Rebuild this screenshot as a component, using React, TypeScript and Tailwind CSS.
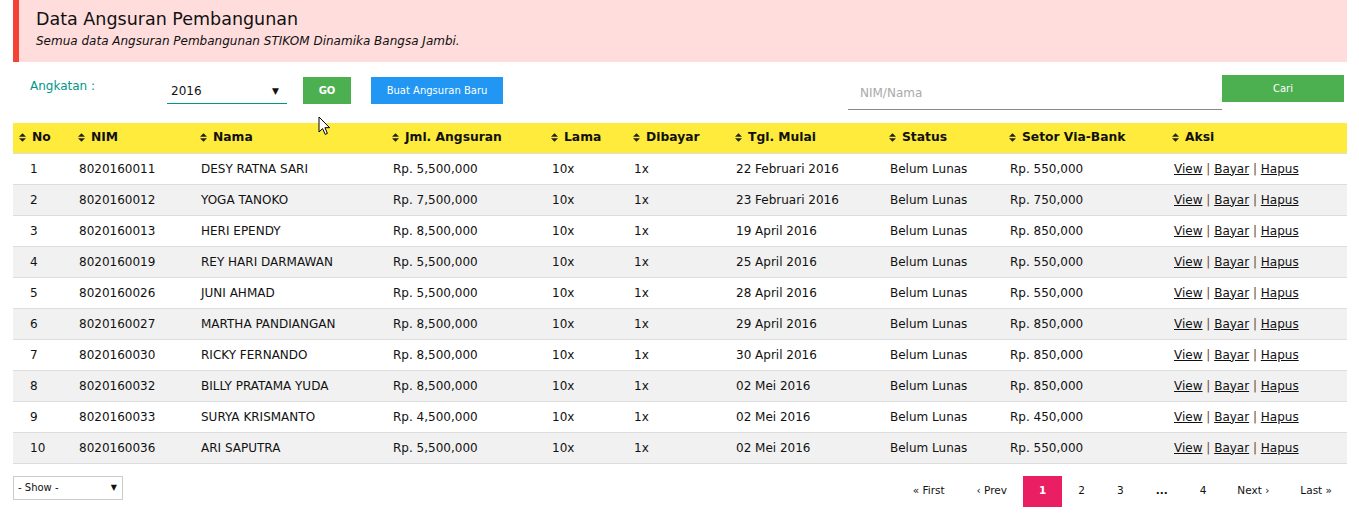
import React from "react";

const rows = [
  ["1", "8020160011", "DESY RATNA SARI", "Rp. 5,500,000", "22 Februari 2016", "Rp. 550,000"],
  ["2", "8020160012", "YOGA TANOKO", "Rp. 7,500,000", "23 Februari 2016", "Rp. 750,000"],
  ["3", "8020160013", "HERI EPENDY", "Rp. 8,500,000", "19 April 2016", "Rp. 850,000"],
  ["4", "8020160019", "REY HARI DARMAWAN", "Rp. 5,500,000", "25 April 2016", "Rp. 550,000"],
  ["5", "8020160026", "JUNI AHMAD", "Rp. 5,500,000", "28 April 2016", "Rp. 550,000"],
  ["6", "8020160027", "MARTHA PANDIANGAN", "Rp. 8,500,000", "29 April 2016", "Rp. 850,000"],
  ["7", "8020160030", "RICKY FERNANDO", "Rp. 8,500,000", "30 April 2016", "Rp. 850,000"],
  ["8", "8020160032", "BILLY PRATAMA YUDA", "Rp. 8,500,000", "02 Mei 2016", "Rp. 850,000"],
  ["9", "8020160033", "SURYA KRISMANTO", "Rp. 4,500,000", "02 Mei 2016", "Rp. 450,000"],
  ["10", "8020160036", "ARI SAPUTRA", "Rp. 5,500,000", "02 Mei 2016", "Rp. 550,000"],
];

const headers = ["No", "NIM", "Nama", "Jml. Angsuran", "Lama", "Dibayar", "Tgl. Mulai", "Status", "Setor Via-Bank", "Aksi"];
const widths = [59, 122, 192, 159, 82, 102, 154, 120, 163, 181];

function SortIcon() {
  return (
    <svg width="7" height="9" viewBox="0 0 7 9" className="shrink-0">
      <polygon points="0,3.8 3.5,0.3 7,3.8" fill="#222" />
      <polygon points="0,5.2 3.5,8.7 7,5.2" fill="#222" />
    </svg>
  );
}

function Cursor() {
  return (
    <svg
      width="13"
      height="20"
      viewBox="0 0 13 20"
      className="absolute left-[318px] top-[116px]"
    >
      <path
        d="M1 1 L1 16 L4.6 12.6 L7.2 18.4 L9.4 17.4 L6.9 11.7 L11.6 11.7 Z"
        fill="#fff"
        stroke="#000"
        strokeWidth="1"
        strokeLinejoin="miter"
      />
    </svg>
  );
}

export default function App() {
  return (
    <div className="relative w-[1359px] h-[521px] bg-white pl-[13px] pr-[12px] font-['DejaVu_Sans',sans-serif] text-[#111] overflow-hidden">
      {/* Title panel */}
      <div className="h-[62px] bg-[#ffdddd] border-l-[6px] border-[#f44336] pl-[17px] pt-[7px]">
        <div className="text-[17.5px] leading-[24px] text-[#111]">Data Angsuran Pembangunan</div>
        <div className="text-[12px] leading-[20px] italic text-[#111]">
          Semua data Angsuran Pembangunan STIKOM Dinamika Bangsa Jambi.
        </div>
      </div>

      {/* Controls */}
      <div className="flex items-start h-[61px]">
        <div className="ml-[17px] mt-[15px] w-[137px] text-[12px] leading-[18px] text-[#009688]">Angkatan :</div>
        <div className="mt-[17px] w-[120px] h-[25px] border-b border-[#009688] flex items-start justify-between pl-[4px] pr-[8px]">
          <span className="text-[12px] leading-[24px] text-[#111]">2016</span>
          <span className="text-[9px] leading-[24px] text-[#111]">▼</span>
        </div>
        <div className="ml-[16px] mt-[15px] w-[48px] h-[27px] bg-[#4caf50] text-white text-[10px] font-bold flex items-center justify-center">
          GO
        </div>
        <div className="ml-[20px] mt-[15px] w-[132px] h-[27px] bg-[#2196f3] text-white text-[10px] flex items-center justify-center">
          Buat Angsuran Baru
        </div>
        <div className="ml-auto mt-[16px] w-[374px] h-[32px] border-b border-[#888] pl-[12px] pt-[2px]">
          <span className="text-[12px] leading-[24px] text-[#aaa]">NIM/Nama</span>
        </div>
        <div className="mt-[13px] mr-[3px] w-[122px] h-[27px] bg-[#4caf50] text-white text-[10px] flex items-center justify-center">
          Cari
        </div>
      </div>

      {/* Table */}
      <table className="w-[1334px] table-fixed border-collapse">
        <colgroup>
          {widths.map((w, i) => (
            <col key={i} style={{ width: w }} />
          ))}
        </colgroup>
        <thead>
          <tr className="bg-[#ffeb3b] border-b border-[#ddd] h-[30px]">
            {headers.map((h) => (
              <th key={h} className="p-0 pl-[6px] text-left align-middle">
                <div className="flex items-center gap-[6px] text-[12.3px] font-bold leading-[29px] text-[#111] whitespace-nowrap">
                  <SortIcon />
                  <span>{h}</span>
                </div>
              </th>
            ))}
          </tr>
        </thead>
        <tbody>
          {rows.map((r, i) => (
            <tr
              key={r[0]}
              className={`border-b border-[#ddd] h-[31px] text-[12px] leading-[30px] ${i % 2 === 1 ? "bg-[#f1f1f1]" : "bg-white"}`}
            >
              <td className="p-0 pl-[17px]">{r[0]}</td>
              <td className="p-0 pl-[7px]">{r[1]}</td>
              <td className="p-0 pl-[7px] whitespace-nowrap">{r[2]}</td>
              <td className="p-0 pl-[7px]">{r[3]}</td>
              <td className="p-0 pl-[7px]">10x</td>
              <td className="p-0 pl-[7px]">1x</td>
              <td className="p-0 pl-[7px] whitespace-nowrap">{r[4]}</td>
              <td className="p-0 pl-[7px]">Belum Lunas</td>
              <td className="p-0 pl-[7px]">{r[5]}</td>
              <td className="p-0 pl-[8px] whitespace-nowrap">
                <span className="underline">View</span>
                <span className="text-[#6b4a2e]"> | </span>
                <span className="underline">Bayar</span>
                <span className="text-[#6b4a2e]"> | </span>
                <span className="underline">Hapus</span>
              </td>
            </tr>
          ))}
        </tbody>
      </table>

      {/* Footer */}
      <div className="flex items-start justify-between mt-[12px]">
        <div className="w-[110px] h-[24px] border border-[#ccc] flex items-center justify-between pl-[4px] pr-[5px]">
          <span className="text-[10px] text-[#111]">- Show -</span>
          <span className="text-[8px] text-[#111]">▼</span>
        </div>
        <div className="flex h-[31px] text-[10.5px] text-[#111]">
          <div className="px-[16px] flex items-center">« First</div>
          <div className="px-[16px] flex items-center">‹ Prev</div>
          <div className="px-[16px] flex items-center bg-[#e91e63] text-white font-bold">1</div>
          <div className="px-[16px] flex items-center">2</div>
          <div className="px-[16px] flex items-center">3</div>
          <div className="px-[16px] flex items-center font-bold">...</div>
          <div className="px-[16px] flex items-center">4</div>
          <div className="px-[15px] flex items-center">Next ›</div>
          <div className="pl-[16px] pr-[15px] flex items-center">Last »</div>
        </div>
      </div>

      <Cursor />
    </div>
  );
}
